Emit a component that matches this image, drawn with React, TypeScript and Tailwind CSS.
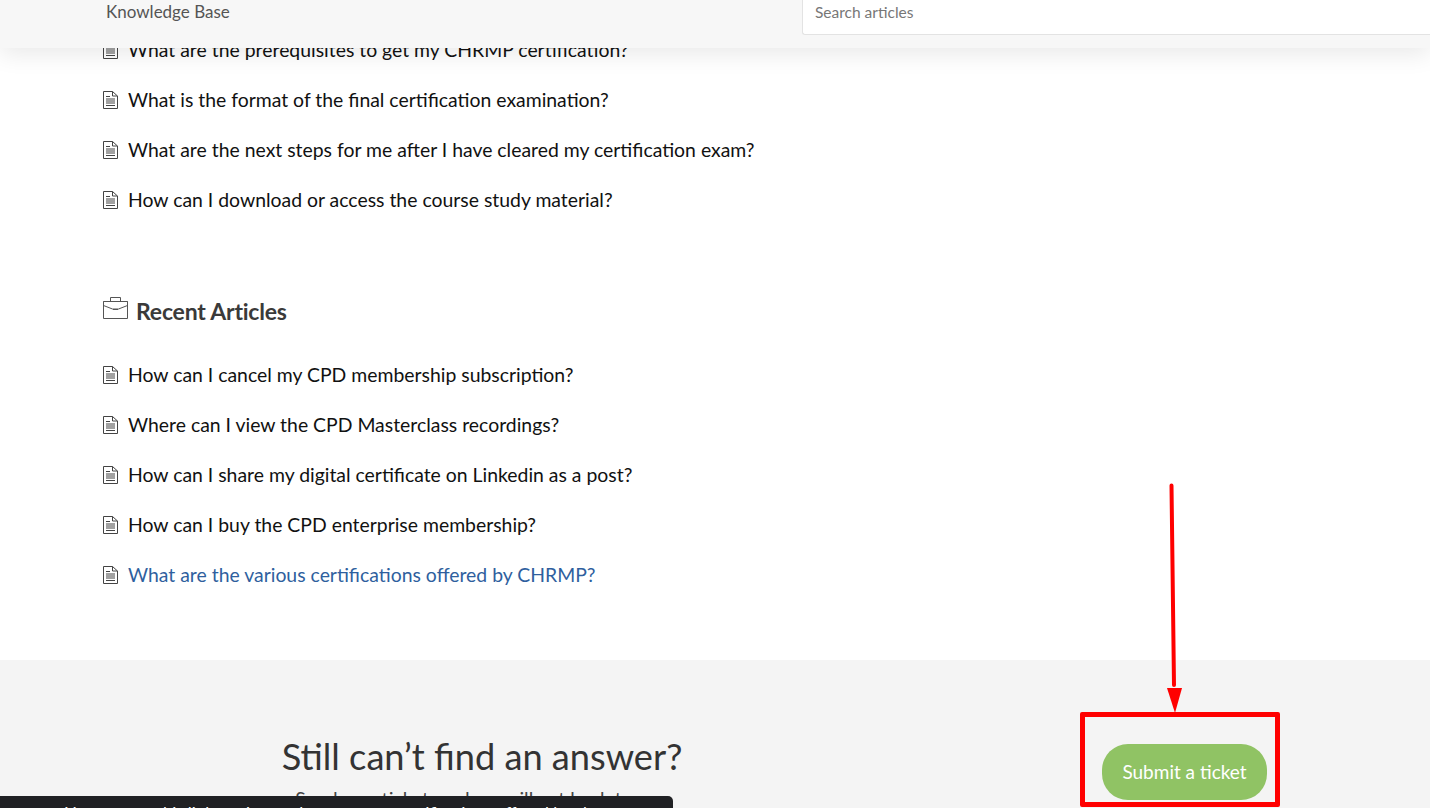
const popular = [
  "What are the prerequisites to get my CHRMP certification?",
  "What is the format of the final certification examination?",
  "What are the next steps for me after I have cleared my certification exam?",
  "How can I download or access the course study material?",
];

const recent = [
  "How can I cancel my CPD membership subscription?",
  "Where can I view the CPD Masterclass recordings?",
  "How can I share my digital certificate on Linkedin as a post?",
  "How can I buy the CPD enterprise membership?",
  "What are the various certifications offered by CHRMP?",
];

function DocIcon() {
  return (
    <svg width="15" height="18" viewBox="0 0 15 18" fill="none" stroke="#444" strokeWidth="1" className="shrink-0">
      <path d="M.5 .5h9l5 4.500v12.500H.5z" />
      <path d="M9.500 .5V5h5" />
      <path d="M3 5.500h4M3 8h9M3 10h9M3 12h9M3 14.500h9" />
    </svg>
  );
}

function BriefcaseIcon() {
  return (
    <svg width="25" height="24" viewBox="0 0 25 24" fill="none" stroke="#555" strokeWidth="1" className="shrink-0">
      <path d="M.5 5.500h24v17H.5z" />
      <path d="M.5 5.500v4l9 3.500h6l9-3.500v-4" />
      <path d="M7.500 5.500V1.500h10v4" />
      <path d="M10 13.500h5" />
    </svg>
  );
}

function ArticleRow({ title, active }: { title: string; active?: boolean }) {
  return (
    <li className="flex h-[50px] items-center gap-[10px]">
      <DocIcon />
      <span className={active ? "text-[#2f5f9e]" : "text-[#111]"}>{title}</span>
    </li>
  );
}

export default function App() {
  return (
    <div className="relative h-[808px] w-[1430px] overflow-hidden bg-white font-['Lato',sans-serif]">
      {/* header sits over the scrolled page */}
      <header className="absolute inset-x-0 top-0 z-10 flex h-[48px] items-start justify-between bg-[#f7f7f7] pl-[106px] shadow-[0_6px_24px_rgba(0,0,0,0.09)]">
        <span className="text-[17px] leading-6 text-[#555]">Knowledge Base</span>
        <div className="-mt-px h-[36px] w-[628px] rounded-bl-[3px] border-b border-l border-[#e3e3e3] bg-white pl-3 pt-[1px] text-[15.500px] leading-6 text-[#777]">
          Search articles
        </div>
      </header>

      <main className="pl-[103px] pt-[25px] text-[19.400px]">
        <ul>
          {popular.map((t) => (
            <ArticleRow key={t} title={t} />
          ))}
        </ul>

        <h2 className="mt-[71px] flex h-[30px] items-center gap-[8px] text-[23px] font-bold tracking-[-0.2px] text-[#3a3a3a]">
          <span className="-mt-[7px]">
            <BriefcaseIcon />
          </span>
          Recent Articles
        </h2>

        <ul className="mt-[24px]">
          {recent.map((t, i) => (
            <ArticleRow key={t} title={t} active={i === recent.length - 1} />
          ))}
        </ul>
      </main>

      <section className="mt-[60px] flex h-[148px] bg-[#f4f4f4]">
        <div className="w-[964px] pt-[72px] text-center">
          <h2 className="text-[36.200px] leading-[48px] text-[#333]">Still can’t find an answer?</h2>
          <p className="mt-[7px] text-[19.400px] leading-6 text-[#444]">Send us a ticket, and we will get back to you</p>
        </div>
        <div className="pl-[138px] pt-[84px]">
          <button className="h-[56px] w-[165px] rounded-[26px] bg-[#90c364] text-[19px] text-white">Submit a ticket</button>
        </div>
      </section>

      {/* dark tooltip cut off at the bottom edge */}
      <div className="absolute left-0 top-[796px] z-20 h-[40px] w-[673px] rounded-tr-[5px] bg-[#202124] pl-[14px] pt-[8px] text-center text-[16.800px] leading-5 text-white">
        You can use this link to view and access your certifications offered by chrmp
      </div>

      {/* red annotation */}
      <div className="absolute left-[1080px] top-[712px] z-20 h-[95px] w-[200px] rounded-[2px] border-[5px] border-[#ff0000]" />
      <svg className="absolute left-[1150px] top-[480px] z-20" width="50" height="235" viewBox="0 0 50 235" fill="none">
        <path d="M21.500 5.500L24 205" stroke="#ff0000" strokeWidth="4" strokeLinecap="round" />
        <path d="M17 208h15l-7 25z" fill="#ff0000" />
      </svg>
    </div>
  );
}
